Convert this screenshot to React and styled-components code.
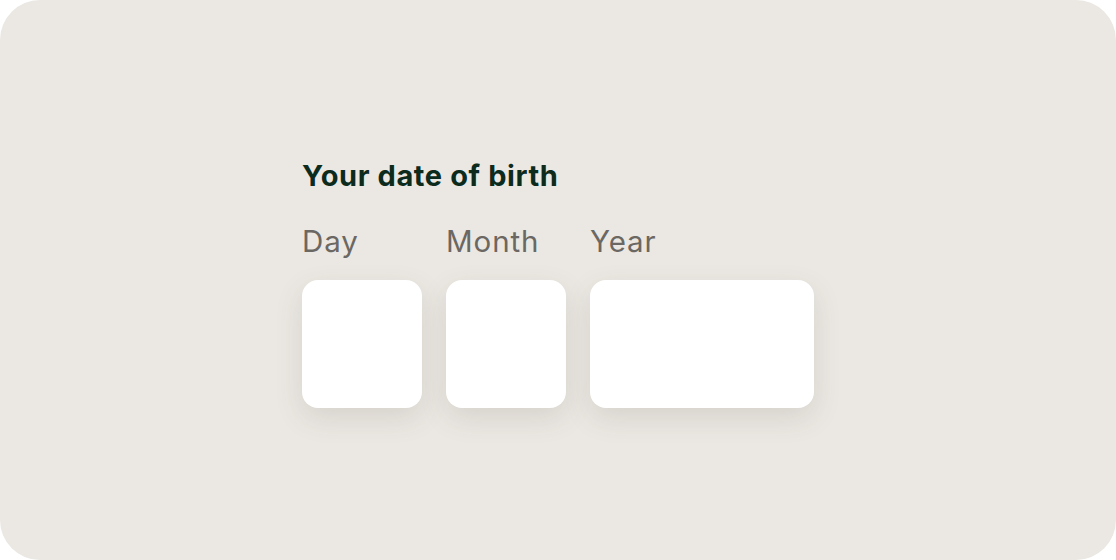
import styled, { createGlobalStyle } from "styled-components";

const GlobalStyle = createGlobalStyle`
   html, body {
      margin: 0;
      padding: 0;
      background: #ffffff;
   }
   * {
      box-sizing: border-box;
   }
`

const Canvas = styled.div`
   width: 1116px;
   height: 560px;
   border-radius: 40px;
   background-color: #ebe8e3;
   display: flex;
   justify-content: center;
   align-items: flex-start;
   padding-top: 158px;
   font-family: Inter, "Noto Sans", sans-serif;
`

const Form = styled.div`
   width: 512px;
   display: flex;
   flex-direction: column;
`

const Title = styled.h2`
   margin: 0 0 29px 0;
   font-size: 29px;
   line-height: 36px;
   font-weight: 700;
   color: #0d2b1d;
   letter-spacing: 0.6px;
`

const Fields = styled.div`
   display: flex;
   gap: 24px;
`

const Field = styled.label`
   display: flex;
   flex-direction: column;
   gap: 21px;

   span {
      font-size: 29.5px;
      line-height: 36px;
      font-weight: 400;
      color: #6b6762;
      letter-spacing: 0.9px;
   }
`

const Input = styled.input`
   width: ${props => props.wide ? "224px" : "120px"};
   height: 128px;
   border: none;
   outline: none;
   border-radius: 16px;
   background-color: #ffffff;
   box-shadow: 0 10px 28px rgba(80, 64, 48, 0.13);
   font-family: inherit;
   font-size: 28px;
   text-align: center;
   color: #0d2b1d;
`

export default function App() {
   return (
      <>
         <GlobalStyle />
         <Canvas>
            <Form>
               <Title>Your date of birth</Title>
               <Fields>
                  <Field>
                     <span>Day</span>
                     <Input />
                  </Field>
                  <Field>
                     <span>Month</span>
                     <Input />
                  </Field>
                  <Field>
                     <span>Year</span>
                     <Input wide />
                  </Field>
               </Fields>
            </Form>
         </Canvas>
      </>
   )
}
